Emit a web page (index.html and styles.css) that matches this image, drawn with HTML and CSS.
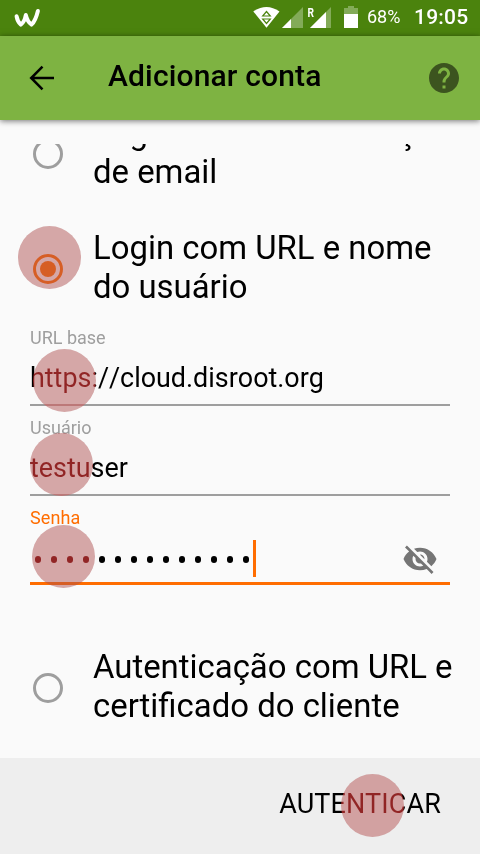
FILE: index.html
```html
<!DOCTYPE html>
<html lang="pt-BR">
<head>
<meta charset="utf-8">
<title>Adicionar conta</title>
<link rel="stylesheet" href="styles.css">
</head>
<body>
<div class="screen">
  <div class="status">
    <svg class="logo" width="48" height="36" viewBox="0 0 48 36"><path d="M16.600 16.300Q17.500 21.500 20.800 24.600Q24.500 22 25.800 15Q27.500 22 31.500 24.600Q35.500 21 37.900 11" fill="none" stroke="#fff" stroke-width="4" stroke-linecap="round" stroke-linejoin="round"/></svg>
    <svg class="signals" width="112" height="36" viewBox="250 0 112 36">
      <path d="M253.300 11.500Q266.500 2.500 279.500 11.500L266.500 27.700Z" fill="#fff"/>
      <path d="M262.700 16L266.500 11.500L270.300 16ZM262.700 19L266.500 23.500L270.300 19Z" fill="none" stroke="#4b830d" stroke-width="1.200"/>
      <path d="M282 28L303 7V28Z" fill="#83ab58"/><path d="M282 28L291 19V28Z" fill="#fff"/>
      <path d="M310 28L331 7V28Z" fill="#83ab58"/><path d="M310 28L326 12V28Z" fill="#fff"/>
      <path d="M344 14V8H348V6H354V8H358V14Z" fill="#83ab58"/><path d="M344 14H358V28H344Z" fill="#fff"/>
      <text class="roaming" x="307.500" y="16.500" textLength="6.500" lengthAdjust="spacingAndGlyphs">R</text>
    </svg>
    <span class="battery">68%</span>
    <span class="clock">19:05</span>
  </div>
  <header class="toolbar">
    <svg class="back" width="26" height="26" viewBox="0 0 26 26"><path d="M25 13H2M13.500 1.700L2.200 13L13.500 24.300" fill="none" stroke="#000" stroke-width="2.500"/></svg>
    <h1 class="title">Adicionar conta</h1>
    <svg class="help" width="36" height="36" viewBox="0 0 24 24"><path fill="#3c541f" d="M12 2C6.480 2 2 6.480 2 12s4.480 10 10 10 10-4.480 10-10S17.520 2 12 2zm1 17h-2v-2h2v2zm2.070-7.750l-.9.920C13.450 12.900 13 13.500 13 15h-2v-.5c0-1.100.45-2.100 1.170-2.830l1.240-1.260c.37-.36.59-.86.59-1.410 0-1.100-.9-2-2-2s-2 .9-2 2H8c0-2.210 1.790-4 4-4s4 1.790 4 4c0 .88-.36 1.680-.93 2.250z"/></svg>
  </header>
  <main class="content">
    <div class="option first">
      <span class="radio"></span>
      <span class="label"><span class="scrolled">Login com seu enderço</span><br>de email</span>
    </div>
    <div class="option second">
      <span class="radio checked"></span>
      <span class="label">Login com URL e nome<br>do usuário</span>
    </div>
    <div class="field">
      <div class="caption">URL base</div>
      <div class="value">https://cloud.disroot.org</div>
    </div>
    <div class="field">
      <div class="caption">Usuário</div>
      <div class="value">testuser</div>
    </div>
    <div class="field active">
      <div class="caption">Senha</div>
      <div class="value"><span class="dots"><i></i><i></i><i></i><i></i><i></i><i></i><i></i><i></i><i></i><i></i><i></i><i></i><i></i><i></i></span><span class="caret"></span>
        <svg class="eye" width="36" height="36" viewBox="0 0 24 24"><path fill="#757575" d="M12 7c2.760 0 5 2.240 5 5 0 .65-.13 1.260-.36 1.830l2.920 2.920c1.510-1.260 2.700-2.890 3.430-4.750-1.730-4.390-6-7.500-11-7.500-1.400 0-2.740.25-3.980.7l2.160 2.160C10.740 7.130 11.350 7 12 7zM2 4.270l2.280 2.280.46.46C3.080 8.300 1.780 10.020 1 12c1.730 4.390 6 7.500 11 7.500 1.550 0 3.030-.3 4.380-.84l.42.42L19.730 22 21 20.730 3.270 3 2 4.270zM7.530 9.800l1.550 1.550c-.05.21-.08.43-.08.65 0 1.660 1.340 3 3 3 .22 0 .44-.03.65-.08l1.550 1.550c-.67.33-1.410.53-2.200.53-2.760 0-5-2.240-5-5 0-.79.2-1.530.53-2.200zm4.310-.78l3.150 3.150.02-.16c0-1.660-1.340-3-3-3l-.17.01z"/></svg>
      </div>
    </div>
    <div class="option last">
      <span class="radio"></span>
      <span class="label">Autenticação com URL e<br>certificado do cliente</span>
    </div>
  </main>
  <footer class="actions"><span class="submit">AUTENTICAR</span></footer>
  <span class="touch t1"></span><span class="glow t1"></span>
  <span class="touch t2"></span><span class="glow t2"></span>
  <span class="touch t3"></span><span class="glow t3"></span>
  <span class="touch t4"></span><span class="glow t4"></span>
  <span class="touch t5"></span><span class="glow t5"></span>
</div>
</body>
</html>
```
FILE: styles.css
```css
* { box-sizing: border-box; }
body { margin: 0; font-family: Roboto, "Liberation Sans", sans-serif; color: #000; }
.screen { position: relative; isolation: isolate; width: 480px; height: 854px; overflow: hidden; background: #fafafa; display: flex; flex-direction: column; }
.status { height: 36px; flex: none; background: #4b830d; color: #fff; display: flex; align-items: center; }
.logo { flex: none; }
.signals { margin-left: 202px; flex: none; }
.roaming { font-size: 12px; font-weight: 700; fill: #fff; }
.battery { margin-left: 5px; font-size: 18px; line-height: 34px; width: 47px; white-space: nowrap; position: relative; top: -1px; }
.clock { font-size: 21px; font-weight: 500; line-height: 34px; white-space: nowrap; letter-spacing: .2px; position: relative; top: -1px; }
.toolbar { height: 84px; flex: none; background: #7eb342; display: flex; align-items: center; box-shadow: 0 1px 6px rgba(0,0,0,.55); }
.back { margin-left: 29px; }
.title { margin: 0 0 4px 53px; font-size: 30px; font-weight: 500; line-height: 36px; flex: 1; white-space: nowrap; letter-spacing: .15px; }
.help { margin-right: 18px; }
.content { margin-top: 24px; height: 614px; flex: none; overflow: hidden; }
.option { display: flex; align-items: center; padding-left: 33px; }
.radio { width: 30px; height: 30px; border: 3px solid #9e9e9e; border-radius: 50%; flex: none; margin-right: 30px; position: relative; top: 2px; }
.radio.checked { border-color: #ff6d00; display: flex; align-items: center; justify-content: center; }
.radio.checked::after { content: ""; width: 16px; height: 16px; flex: none; border-radius: 50%; background: #ff6d00; }
.label { font-size: 32.9px; line-height: 39px; white-space: nowrap; }
.first { margin-top: -31px; }
.scrolled { display: inline-block; transform: translateY(.3px) rotate(.001deg); }
.second { margin-top: 37px; }
.last { margin-top: 51px; }
.field { margin: 0 30px; height: 90px; }
.second + .field { margin-top: 20px; }
.caption { font-size: 18px; line-height: 24px; color: #9e9e9e; }
.value { height: 56px; font-size: 26.9px; line-height: 57px; border-bottom: 2px solid #9e9e9e; white-space: nowrap; font-kerning: none; }
.active .caption { color: #ff6d00; letter-spacing: .1px; }
.active .value { height: 55px; padding-top: 5px; border-bottom: 3px solid #ff6d00; display: flex; align-items: center; }
.dots { display: flex; gap: 10px; padding: 2px 0 0 5px; }
.dots i { width: 6px; height: 7px; border-radius: 3px; background: #000; }
.caret { width: 3px; height: 37px; margin-left: 4px; background: #ff6d00; }
.eye { margin: 1px 12px 0 auto; }
.actions { height: 96px; background: #eee; display: flex; justify-content: flex-end; padding: 28px 39px 0 0; }
.submit { font-size: 27px; line-height: 36px; letter-spacing: .13px; }
.touch, .glow { position: absolute; width: 63px; height: 63px; border-radius: 50%; }
.touch { background: rgb(69,133,133); mix-blend-mode: multiply; }
.glow { background: rgb(145,37,37); mix-blend-mode: plus-lighter; }
.t1 { left: 18px; top: 226px; }
.t2 { left: 33px; top: 349px; }
.t3 { left: 30px; top: 433px; }
.t4 { left: 31.5px; top: 525px; }
.t5 { left: 340.5px; top: 774px; }
```
